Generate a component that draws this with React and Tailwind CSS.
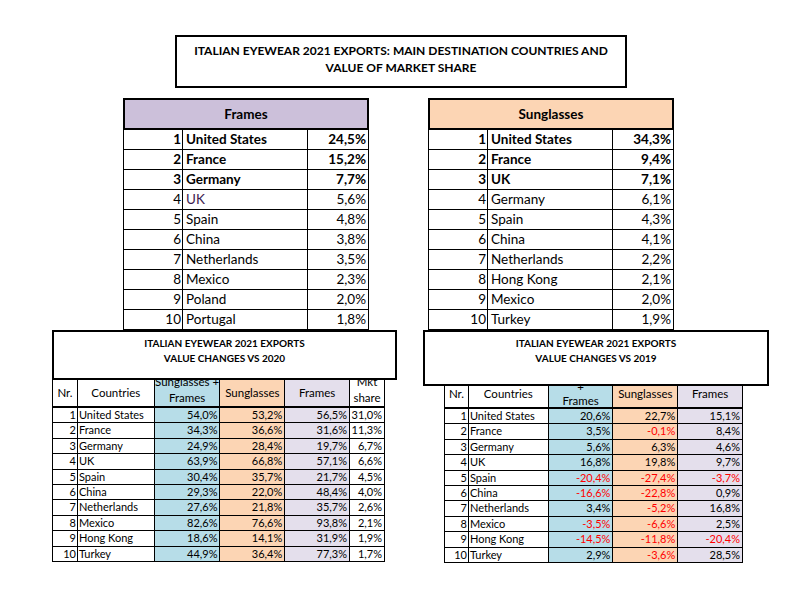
const frames = [
  [1, "United States", "24,5%"],
  [2, "France", "15,2%"],
  [3, "Germany", "7,7%"],
  [4, "UK", "5,6%"],
  [5, "Spain", "4,8%"],
  [6, "China", "3,8%"],
  [7, "Netherlands", "3,5%"],
  [8, "Mexico", "2,3%"],
  [9, "Poland", "2,0%"],
  [10, "Portugal", "1,8%"],
];

const sunglasses = [
  [1, "United States", "34,3%"],
  [2, "France", "9,4%"],
  [3, "UK", "7,1%"],
  [4, "Germany", "6,1%"],
  [5, "Spain", "4,3%"],
  [6, "China", "4,1%"],
  [7, "Netherlands", "2,2%"],
  [8, "Hong Kong", "2,1%"],
  [9, "Mexico", "2,0%"],
  [10, "Turkey", "1,9%"],
];

const vs2020 = [
  [1, "United States", "54,0%", "53,2%", "56,5%", "31,0%"],
  [2, "France", "34,3%", "36,6%", "31,6%", "11,3%"],
  [3, "Germany", "24,9%", "28,4%", "19,7%", "6,7%"],
  [4, "UK", "63,9%", "66,8%", "57,1%", "6,6%"],
  [5, "Spain", "30,4%", "35,7%", "21,7%", "4,5%"],
  [6, "China", "29,3%", "22,0%", "48,4%", "4,0%"],
  [7, "Netherlands", "27,6%", "21,8%", "35,7%", "2,6%"],
  [8, "Mexico", "82,6%", "76,6%", "93,8%", "2,1%"],
  [9, "Hong Kong", "18,6%", "14,1%", "31,9%", "1,9%"],
  [10, "Turkey", "44,9%", "36,4%", "77,3%", "1,7%"],
];

const vs2019 = [
  [1, "United States", "20,6%", "22,7%", "15,1%"],
  [2, "France", "3,5%", "-0,1%", "8,4%"],
  [3, "Germany", "5,6%", "6,3%", "4,6%"],
  [4, "UK", "16,8%", "19,8%", "9,7%"],
  [5, "Spain", "-20,4%", "-27,4%", "-3,7%"],
  [6, "China", "-16,6%", "-22,8%", "0,9%"],
  [7, "Netherlands", "3,4%", "-5,2%", "16,8%"],
  [8, "Mexico", "-3,5%", "-6,6%", "2,5%"],
  [9, "Hong Kong", "-14,5%", "-11,8%", "-20,4%"],
  [10, "Turkey", "2,9%", "-3,6%", "28,5%"],
];

function RankTable({ title, headerBg, rows, purpleUk }) {
  return (
    <div className="w-[246px]">
      <div
        className={`h-[32px] ${headerBg} border-2 border-black flex items-center justify-center font-bold text-[13.5px]`}
      >
        {title}
      </div>
      {rows.map(([n, country, value]) => {
        const bold = n <= 3 ? "font-bold" : "";
        return (
          <div
            key={n}
            className={`flex h-[20px] border-b border-l border-black text-[13.5px] leading-[19px] ${bold}`}
          >
            <div className="w-[59px] border-r border-black text-right pr-[1px]">{n}</div>
            <div
              className={`w-[125px] border-r border-black pl-[3px] ${
                purpleUk && country === "UK" ? "text-[#3d1b50]" : ""
              }`}
            >
              {country}
            </div>
            <div className="w-[61px] border-r border-black text-right pr-[2px]">{value}</div>
          </div>
        );
      })}
    </div>
  );
}

function HeadCell({ w, bg = "", children, two, tight }) {
  const lead = two
    ? tight
      ? "items-end leading-[13.5px]"
      : "items-end leading-[16px]"
    : "items-center leading-[14px]";
  return (
    <div
      className={`${w} ${bg} border-r border-black h-full overflow-hidden flex justify-center text-center text-[11.5px] ${lead}`}
    >
      <div>{children}</div>
    </div>
  );
}

function Num({ v, w, bg }) {
  const red = v.startsWith("-") ? "text-[#ff0000]" : "";
  return (
    <div className={`${w} ${bg} ${red} border-r border-black text-right pr-[2px]`}>{v}</div>
  );
}

export default function App() {
  return (
    <div className="w-[794px] h-[590px] bg-white text-black font-['Lato',sans-serif] overflow-hidden">
      {/* Main title */}
      <div className="pt-[35px] pl-[175px]">
        <div className="w-[452px] h-[53px] border-2 border-black flex flex-col items-center pt-[5px] font-bold text-[12px] leading-[17px]">
          <div>ITALIAN EYEWEAR 2021 EXPORTS: MAIN DESTINATION COUNTRIES AND</div>
          <div>VALUE OF MARKET SHARE</div>
        </div>
      </div>

      {/* Top ranking tables */}
      <div className="flex gap-[59px] pl-[123px] mt-[10px]">
        <RankTable title="Frames" headerBg="bg-[#ccc0da]" rows={frames} purpleUk />
        <RankTable title="Sunglasses" headerBg="bg-[#fcd5b4]" rows={sunglasses} />
      </div>

      {/* Change tables */}
      <div className="flex items-start pl-[52px]">
        {/* vs 2020 */}
        <div className="w-[345px]">
          <div className="h-[50px] border-2 border-black flex flex-col items-center pt-[4px] font-bold text-[10px] leading-[15px]">
            <div>ITALIAN EYEWEAR 2021 EXPORTS</div>
            <div>VALUE CHANGES VS 2020</div>
          </div>
          <div className="w-[333px] border-l border-black">
            <div className="flex h-[28px] border-b-2 border-black">
              <HeadCell w="w-[25px]">Nr.</HeadCell>
              <HeadCell w="w-[77px]">Countries</HeadCell>
              <HeadCell w="w-[66px]" bg="bg-[#b7dde8]" two>
                Sunglasses +<br />Frames
              </HeadCell>
              <HeadCell w="w-[65px]" bg="bg-[#fcd5b4]">Sunglasses</HeadCell>
              <HeadCell w="w-[65px]" bg="bg-[#e4dfec]">Frames</HeadCell>
              <HeadCell w="w-[35px]" two>
                Mkt<br />share
              </HeadCell>
            </div>
            {vs2020.map(([n, c, a, b, f, m]) => (
              <div
                key={n}
                className="flex h-[15.4px] border-b border-black text-[11px] leading-[14px]"
              >
                <div className="w-[25px] border-r border-black text-right pr-[1px]">{n}</div>
                <div className="w-[77px] border-r border-black pl-[1px]">{c}</div>
                <Num v={a} w="w-[66px]" bg="bg-[#b7dde8]" />
                <Num v={b} w="w-[65px]" bg="bg-[#fcd5b4]" />
                <Num v={f} w="w-[65px]" bg="bg-[#e4dfec]" />
                <Num v={m} w="w-[35px]" bg="" />
              </div>
            ))}
          </div>
        </div>

        {/* vs 2019 */}
        <div className="w-[346px] ml-[26px]">
          <div className="relative z-10 bg-white h-[56px] border-2 border-black flex flex-col items-center pt-[4px] font-bold text-[10px] leading-[15px]">
            <div>ITALIAN EYEWEAR 2021 EXPORTS</div>
            <div>VALUE CHANGES VS 2019</div>
          </div>
          <div className="w-[299px] ml-[21px] -mt-[6px] border-l border-black">
            <div className="flex h-[29px] border-b-2 border-black">
              <HeadCell w="w-[24px]">Nr.</HeadCell>
              <HeadCell w="w-[80px]">Countries</HeadCell>
              <HeadCell w="w-[65px]" bg="bg-[#b7dde8]" two tight>
                Sunglasses +<br />Frames
              </HeadCell>
              <HeadCell w="w-[65px]" bg="bg-[#fcd5b4]">Sunglasses</HeadCell>
              <HeadCell w="w-[65px]" bg="bg-[#e4dfec]">Frames</HeadCell>
            </div>
            {vs2019.map(([n, c, a, b, f]) => (
              <div
                key={n}
                className="flex h-[15.4px] border-b border-black text-[11px] leading-[14px]"
              >
                <div className="w-[24px] border-r border-black text-right pr-[1px]">{n}</div>
                <div className="w-[80px] border-r border-black pl-[1px]">{c}</div>
                <Num v={a} w="w-[65px]" bg="bg-[#b7dde8]" />
                <Num v={b} w="w-[65px]" bg="bg-[#fcd5b4]" />
                <Num v={f} w="w-[65px]" bg="bg-[#e4dfec]" />
              </div>
            ))}
          </div>
        </div>
      </div>
    </div>
  );
}
